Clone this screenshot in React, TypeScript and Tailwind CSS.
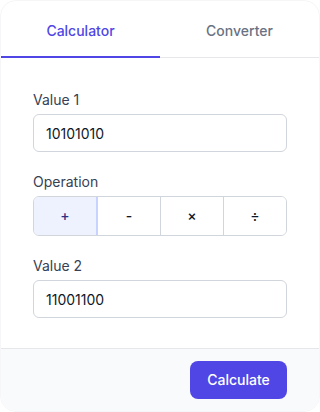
import React, { useState } from "react";

export default function App() {
  const [op, setOp] = useState("+");
  const ops = ["+", "-", "×", "÷"];
  return (
    <div className="w-[320px] h-[412px] bg-white" style={{ fontFamily: "Inter, 'Noto Sans', sans-serif" }}>
      <div className="w-[320px] h-[412px] rounded-2xl border border-[#f6f6f8] overflow-hidden flex flex-col bg-white">
        <div className="flex border-b border-gray-200 h-[57px]">
          <button className="flex-1 h-[57px] -mb-px border-b-2 border-[#4f46e5] text-sm font-medium text-[#4f46e5] flex items-center justify-center pt-[4px]">
            Calculator
          </button>
          <button className="flex-1 h-[57px] -mb-px border-b-2 border-transparent text-sm font-medium text-gray-500 flex items-center justify-center pt-[4px]">
            Converter
          </button>
        </div>
        <div className="flex-1 px-8 pt-8 flex flex-col gap-5">
          <div className="flex flex-col gap-1">
            <label className="text-sm text-gray-700 leading-5">Value 1</label>
            <input
              defaultValue="10101010"
              className="h-[38px] w-full rounded-md border border-gray-300 px-3 text-sm text-gray-900 outline-none"
            />
          </div>
          <div className="flex flex-col gap-1">
            <label className="text-sm text-gray-700 leading-5">Operation</label>
            <div className="grid grid-cols-4 h-10 rounded-md border border-gray-300 overflow-hidden">
              {ops.map((o, i) => (
                <button
                  key={o}
                  onClick={() => setOp(o)}
                  className={
                    "text-sm font-medium flex items-center justify-center " +
                    (i > 0 ? "border-l border-gray-300 " : "") +
                    (op === o
                      ? "bg-[#eef2ff] text-[#312e81] border-r border-r-[#c7d2fe]"
                      : "bg-white text-gray-900")
                  }
                >
                  {o}
                </button>
              ))}
            </div>
          </div>
          <div className="flex flex-col gap-1">
            <label className="text-sm text-gray-700 leading-5">Value 2</label>
            <input
              defaultValue="11001100"
              className="h-[38px] w-full rounded-md border border-gray-300 px-3 text-sm text-gray-900 outline-none"
            />
          </div>
        </div>
        <div className="border-t border-gray-200 bg-gray-50 px-8 py-3 flex justify-end">
          <button className="h-[38px] w-[97px] rounded-lg bg-[#4f46e5] text-white text-sm font-medium">
            Calculate
          </button>
        </div>
      </div>
    </div>
  );
}
